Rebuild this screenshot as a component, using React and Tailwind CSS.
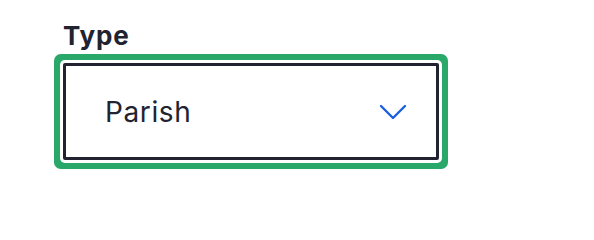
// 「Type」セレクト（フォーカス状態）
export default function App() {
  return (
    <div className="h-[200px] bg-white pl-[63px] pt-[20px]" style={{ fontFamily: 'Inter, "Noto Sans", sans-serif' }}>
      <label className="block text-[26px] leading-[32px] font-bold tracking-[0.8px] text-[#212330] mb-[11px]">Type</label>
      <div className="w-[376px] h-[97px] border-[3px] border-[#212330] rounded-[2px] bg-white shadow-[0_0_0_3px_#ffffff,0_0_0_9px_#29a86a] flex items-center justify-between pl-[39px] pr-[29px]">
        <span className="text-[28px] leading-[34px] tracking-[0.6px] text-[#212330] pt-[1px]">Parish</span>
        <svg className="w-[28px] h-[16px]" viewBox="0 0 28 16" fill="none" stroke="#1a5fe0" strokeWidth={2.4} strokeLinecap="round" strokeLinejoin="round">
          <path d="M2 2l12 12L26 2" />
        </svg>
      </div>
    </div>
  )
}
